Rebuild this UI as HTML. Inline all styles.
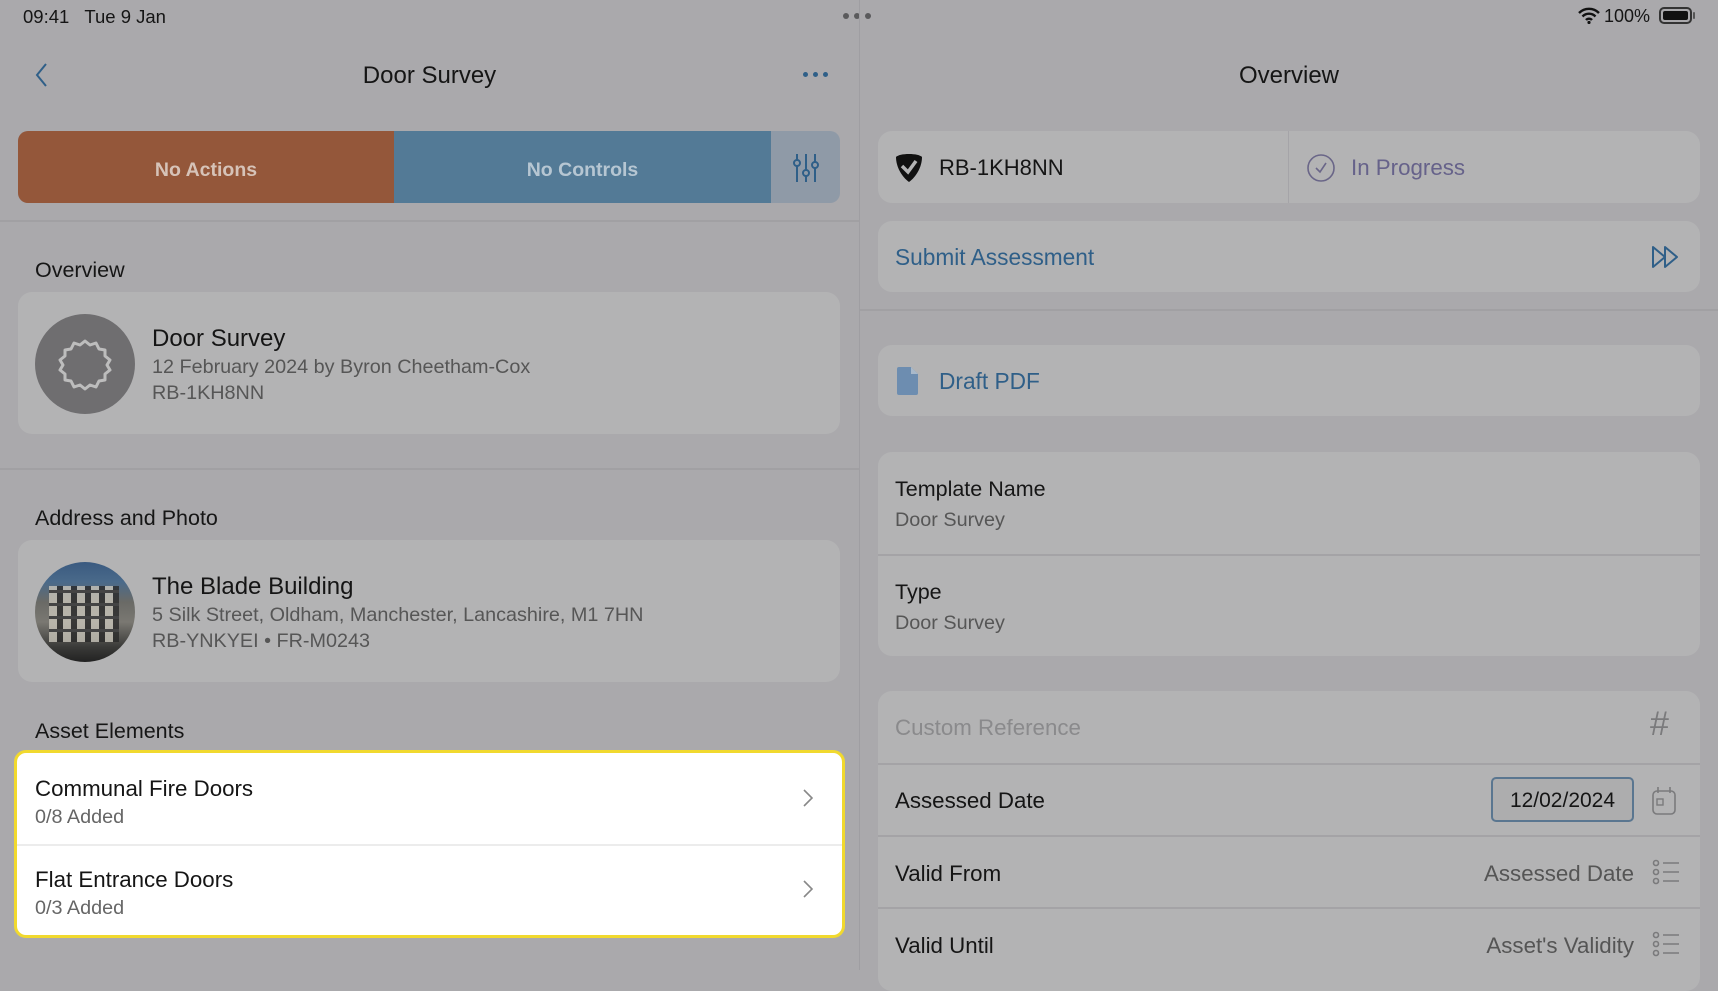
<!DOCTYPE html>
<html><head><meta charset="utf-8"><style>
*{margin:0;padding:0;box-sizing:border-box}
body{width:1718px;height:970px;overflow:hidden;background:#aaa9ac;font-family:"Liberation Sans",sans-serif;color:#151515;position:relative}
.a{position:absolute;white-space:nowrap}
.card{position:absolute;background:#b3b3b4;border-radius:14px}
.t{font-size:22.3px}
.s{font-size:19.8px;color:#565656}
.lbl{font-size:21.5px;color:#161616}
.hr{position:absolute;height:2px;background:#a1a0a3}
</style></head><body>
<!-- status bar -->
<div class="a" style="left:23px;top:6px;font-size:18.5px">09:41&nbsp;&nbsp; Tue 9 Jan</div>
<div class="a" style="left:843px;top:13px;width:32px;height:6px">
<span style="position:absolute;left:0;width:6px;height:6px;border-radius:3px;background:#5a5a5c"></span>
<span style="position:absolute;left:11px;width:6px;height:6px;border-radius:3px;background:#5a5a5c"></span>
<span style="position:absolute;left:22px;width:6px;height:6px;border-radius:3px;background:#5a5a5c"></span></div>
<svg class="a" style="left:1578px;top:7px" width="22" height="17" viewBox="0 0 22 17"><path d="M1 6a14 14 0 0 1 20 0M4.5 9.5a9 9 0 0 1 13 0M8 13a4 4 0 0 1 6 0" stroke="#111" stroke-width="2.4" fill="none"/><circle cx="11" cy="15.5" r="1.6" fill="#111"/></svg>
<div class="a" style="left:1604px;top:6px;font-size:18px">100%</div>
<div class="a" style="left:1659px;top:7px;width:33px;height:17px;border:2px solid #333;border-radius:5px;padding:2px"><div style="width:100%;height:100%;background:#111;border-radius:2px"></div></div>
<div class="a" style="left:1693px;top:12px;width:2px;height:7px;background:#555;border-radius:1px"></div>

<!-- divider -->
<div class="a" style="left:859px;top:0;width:1px;height:970px;background:#9f9ea2"></div>

<!-- left nav -->
<svg class="a" style="left:34px;top:62px" width="16" height="26" viewBox="0 0 16 26"><path d="M12 2L3 13l9 11" stroke="#2f5f88" stroke-width="2" fill="none"/></svg>
<div class="a" style="left:0;width:859px;text-align:center;top:62px;font-size:24px;font-weight:500">Door Survey</div>
<div class="a" style="left:803px;top:72px;width:26px;height:5px">
<span style="position:absolute;left:0;width:4.5px;height:4.5px;border-radius:3px;background:#2f5f88"></span>
<span style="position:absolute;left:10px;width:4.5px;height:4.5px;border-radius:3px;background:#2f5f88"></span>
<span style="position:absolute;left:20px;width:4.5px;height:4.5px;border-radius:3px;background:#2f5f88"></span></div>

<div class="a" style="left:18px;top:131px;width:822px;height:72px;border-radius:10px;overflow:hidden;background:#8f9aa7">
<div class="a" style="left:0;top:0;width:376px;height:72px;background:#94573a;color:#d6c3b8;font-size:19.5px;font-weight:bold;text-align:center;line-height:78px">No Actions</div>
<div class="a" style="left:376px;top:0;width:377px;height:72px;background:#537a96;color:#b6c6d2;font-size:19.5px;font-weight:bold;text-align:center;line-height:78px">No Controls</div>
<svg class="a" style="left:774px;top:22px" width="28" height="30" viewBox="0 0 28 30"><g stroke="#2f5f88" stroke-width="2" fill="none"><path d="M5 1v28M14 1v28M23 1v28"/><circle cx="5" cy="10" r="3" fill="#8f9aa7"/><circle cx="14" cy="20" r="3" fill="#8f9aa7"/><circle cx="23" cy="12" r="3" fill="#8f9aa7"/></g></svg>
</div>
<div class="hr" style="left:0;top:220px;width:859px"></div>

<div class="a lbl" style="left:35px;top:258px">Overview</div>
<div class="card" style="left:18px;top:292px;width:822px;height:142px">
<div class="a" style="left:17px;top:22px;width:100px;height:100px;border-radius:50%;background:#6f6e70"></div>
<svg class="a" style="left:38px;top:43px" width="58" height="58" viewBox="0 0 58 58"><path d="M29 6l5 4 6-2 3 6 6 1 0 6 5 4-3 5 3 5-5 4 0 6-6 1-3 6-6-2-5 4-5-4-6 2-3-6-6-1 0-6-5-4 3-5-3-5 5-4 0-6 6-1 3-6 6 2z" stroke="#bdbdbd" stroke-width="3" fill="none" stroke-linejoin="round"/></svg>
<div class="a" style="left:134px;top:33px;font-size:24px;font-weight:500">Door Survey</div>
<div class="a s" style="left:134px;top:64px">12 February 2024 by Byron Cheetham-Cox</div>
<div class="a s" style="left:134px;top:90px">RB-1KH8NN</div>
</div>
<div class="hr" style="left:0;top:468px;width:859px"></div>

<div class="a lbl" style="left:35px;top:506px">Address and Photo</div>
<div class="card" style="left:18px;top:540px;width:822px;height:142px">
<div class="a" style="left:17px;top:22px;width:100px;height:100px;border-radius:50%;overflow:hidden;background:linear-gradient(180deg,#3a5a80 0%,#4a6a8a 20%,#6a6a66 40%,#7a7872 60%,#3a3a38 85%,#222 100%)">
<div style="position:absolute;left:14px;top:24px;width:70px;height:56px;background:repeating-linear-gradient(90deg,#c9c5ba 0 8px,#2a2a2a 8px 14px),#999;opacity:.8"></div>
<div style="position:absolute;left:14px;top:24px;width:70px;height:56px;background:repeating-linear-gradient(0deg,transparent 0 10px,#444 10px 13px)"></div>
</div>
<div class="a" style="left:134px;top:33px;font-size:24px;font-weight:500">The Blade Building</div>
<div class="a s" style="left:134px;top:64px">5 Silk Street, Oldham, Manchester, Lancashire, M1 7HN</div>
<div class="a s" style="left:134px;top:90px">RB-YNKYEI • FR-M0243</div>
</div>

<div class="a lbl" style="left:35px;top:719px">Asset Elements</div>
<div class="a" style="left:14px;top:750px;width:831px;height:188px;background:#fff;border:3px solid #f1d92e;border-radius:12px">
<div class="a t" style="left:18px;top:23px">Communal Fire Doors</div>
<div class="a s" style="left:18px;top:53px;color:#666">0/8 Added</div>
<svg class="a" style="left:786px;top:36px" width="10" height="18" viewBox="0 0 10 18"><path d="M1 1l8 8-8 8" stroke="#888" stroke-width="1.6" fill="none"/></svg>
<div class="a" style="left:0;top:91px;width:825px;height:2px;background:#ececec"></div>
<div class="a t" style="left:18px;top:114px">Flat Entrance Doors</div>
<div class="a s" style="left:18px;top:144px;color:#666">0/3 Added</div>
<svg class="a" style="left:786px;top:127px" width="10" height="18" viewBox="0 0 10 18"><path d="M1 1l8 8-8 8" stroke="#888" stroke-width="1.6" fill="none"/></svg>
</div>

<!-- right -->
<div class="a" style="left:860px;width:858px;text-align:center;top:62px;font-size:24px;font-weight:500">Overview</div>
<div class="card" style="left:878px;top:131px;width:822px;height:72px">
<svg class="a" style="left:17px;top:22px" width="28" height="30" viewBox="0 0 28 30"><path d="M14 1C8 1 3 2 1 4c0 10 6 20 13 25 7-5 13-15 13-25-2-2-7-3-13-3z" fill="#111"/><path d="M7 13l6 6 8-11" stroke="#b3b3b4" stroke-width="3.5" fill="none"/></svg>
<div class="a" style="left:61px;top:24px;font-size:22px">RB-1KH8NN</div>
<div class="a" style="left:410px;top:0;width:1px;height:72px;background:#a5a4a8"></div>
<svg class="a" style="left:428px;top:22px" width="30" height="30" viewBox="0 0 30 30"><circle cx="15" cy="15" r="13" stroke="#6a6688" stroke-width="1.6" fill="none"/><path d="M10 15l4 4 6-9" stroke="#6a6688" stroke-width="1.6" fill="none"/></svg>
<div class="a" style="left:473px;top:24px;font-size:22.3px;color:#66628a">In Progress</div>
</div>
<div class="card" style="left:878px;top:221px;width:822px;height:71px">
<div class="a" style="left:17px;top:23px;font-size:22.7px;color:#2f5f88">Submit Assessment</div>
<svg class="a" style="left:773px;top:24px" width="30" height="24" viewBox="0 0 30 24"><path d="M2 2v20l12-10zM14 2v20l12-10z" stroke="#2f5f88" stroke-width="2" fill="none" stroke-linejoin="round"/></svg>
</div>
<div class="hr" style="left:860px;top:309px;width:858px"></div>
<div class="card" style="left:878px;top:345px;width:822px;height:71px">
<svg class="a" style="left:19px;top:22px" width="22" height="28" viewBox="0 0 22 28"><path d="M2 0h12l7 7v19a2 2 0 0 1-2 2H2a2 2 0 0 1-2-2V2a2 2 0 0 1 2-2z" fill="#6d8db0"/><path d="M14 0v7h7" fill="#a9b9ca"/></svg>
<div class="a" style="left:61px;top:23px;font-size:22.7px;color:#2f5f88">Draft PDF</div>
</div>
<div class="card" style="left:878px;top:452px;width:822px;height:204px">
<div class="a lbl" style="left:17px;top:25px">Template Name</div>
<div class="a s" style="left:17px;top:57px">Door Survey</div>
<div class="a" style="left:0;top:102px;width:822px;height:2px;background:#a4a3a6"></div>
<div class="a lbl" style="left:17px;top:128px">Type</div>
<div class="a s" style="left:17px;top:160px">Door Survey</div>
</div>
<div class="card" style="left:878px;top:691px;width:822px;height:300px">
<div class="a" style="left:17px;top:24px;font-size:22.3px;color:#8a8a8c">Custom Reference</div>
<div class="a" style="left:772px;top:14px;font-size:34px;color:#7a7a7c;font-weight:300">#</div>
<div class="a" style="left:0;top:72px;width:822px;height:2px;background:#a4a3a6"></div>
<div class="a" style="left:17px;top:97px;font-size:22.3px">Assessed Date</div>
<div class="a" style="left:613px;top:86px;width:143px;height:45px;border:2px solid #5a7690;border-radius:5px;background:#adadae;text-align:center;line-height:43px;font-size:21px">12/02/2024</div>
<svg class="a" style="left:774px;top:94px" width="24" height="30" viewBox="0 0 24 30"><rect x="1" y="6" width="22" height="23" rx="4" stroke="#7a7a7c" stroke-width="1.6" fill="none"/><path d="M6 2v6M18 2v6" stroke="#7a7a7c" stroke-width="1.6"/><rect x="5" y="14" width="6" height="6" stroke="#7a7a7c" stroke-width="1.4" fill="none"/></svg>
<div class="a" style="left:0;top:144px;width:822px;height:2px;background:#a4a3a6"></div>
<div class="a" style="left:17px;top:170px;font-size:22.3px">Valid From</div>
<div class="a" style="right:66px;top:170px;font-size:22.3px;color:#555">Assessed Date</div>
<svg class="a" style="left:774px;top:168px" width="28" height="26" viewBox="0 0 28 26"><g stroke="#7a7a7c" stroke-width="1.6" fill="none"><circle cx="4" cy="4" r="2.5"/><circle cx="4" cy="13" r="2.5"/><circle cx="4" cy="22" r="2.5"/><path d="M11 4h16M11 13h16M11 22h16"/></g></svg>
<div class="a" style="left:0;top:216px;width:822px;height:2px;background:#a4a3a6"></div>
<div class="a" style="left:17px;top:242px;font-size:22.3px">Valid Until</div>
<div class="a" style="right:66px;top:242px;font-size:22.3px;color:#555">Asset's Validity</div>
<svg class="a" style="left:774px;top:240px" width="28" height="26" viewBox="0 0 28 26"><g stroke="#7a7a7c" stroke-width="1.6" fill="none"><circle cx="4" cy="4" r="2.5"/><circle cx="4" cy="13" r="2.5"/><circle cx="4" cy="22" r="2.5"/><path d="M11 4h16M11 13h16M11 22h16"/></g></svg>
</div>
</body></html>
